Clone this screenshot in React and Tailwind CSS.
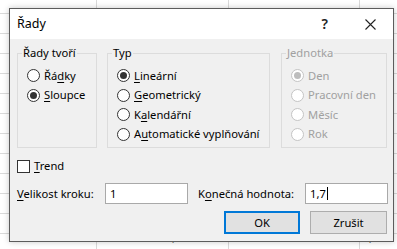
import React from "react";

const Radio = ({ checked, disabled }) => (
  <span
    className={`flex w-[13px] h-[13px] shrink-0 items-center justify-center rounded-full border bg-white ${
      disabled ? "border-[#c4c4c4]" : "border-[#333333]"
    }`}
  >
    {checked && (
      <span className={`w-[7px] h-[7px] rounded-full ${disabled ? "bg-[#bdbdbd]" : "bg-[#333333]"}`} />
    )}
  </span>
);

// accelerator key gets underlined like in win32 dialogs
const Label = ({ text, u }) => {
  if (u === undefined) return <span>{text}</span>;
  return (
    <span>
      {text.slice(0, u)}
      <span className="underline underline-offset-[2px]">{text[u]}</span>
      {text.slice(u + 1)}
    </span>
  );
};

const Option = ({ label, u, checked, disabled }) => (
  <div className={`flex h-[19.5px] items-center gap-[4px] pl-[9px] ${disabled ? "text-[#a0a0a0]" : "text-black"}`}>
    <Radio checked={checked} disabled={disabled} />
    <Label text={label} u={u} />
  </div>
);

const Group = ({ title, width, disabled, children }) => (
  <fieldset className={`h-[102px] ${width} border border-[#dcdcdc]`}>
    <legend className={`ml-[4px] px-[1px] leading-[14px] ${disabled ? "text-[#a0a0a0]" : "text-black"}`}>
      {title}
    </legend>
    <div className="flex flex-col pt-[6px]">{children}</div>
  </fieldset>
);

export default function App() {
  return (
    <div
      className="relative w-[397px] h-[249px] overflow-hidden bg-white bg-[linear-gradient(to_right,transparent_96px,#dadada_96px,#dadada_97px,transparent_97px,transparent_228px,#dadada_228px,#dadada_229px,transparent_229px,transparent_359px,#dadada_359px,#dadada_360px,transparent_360px),linear-gradient(to_bottom,transparent_13px,#dadada_13px,#dadada_14px,transparent_14px)] bg-[length:397px_249px,397px_20px] text-[11.2px] leading-[14px]"
      style={{ fontFamily: '"Noto Sans", "Open Sans", sans-serif' }}
    >
      <span className="absolute left-[172px] top-[243px] text-[9px] leading-[6px] text-[#444]">´</span>
      <span className="absolute left-[369px] top-[243px] text-[9px] leading-[6px] text-[#444]">´</span>

      {/* dialog window */}
      <div className="absolute left-[9px] top-[8px] w-[385px] h-[234px] border border-[#5c5c5c] bg-[#f0f0f0] shadow-[0_0_6px_rgba(0,0,0,0.22)]">
        <div className="flex h-[30px] items-center bg-white pl-[7px]">
          <span className="text-[12.5px]">Řady</span>
          <span className="ml-auto text-[14px] font-semibold text-[#222]">?</span>
          <svg className="ml-[37px] mr-[17px]" width="11" height="11" viewBox="0 0 11 11">
            <path d="M0.5 0.5L10.5 10.5M10.5 0.5L0.5 10.5" stroke="#222" strokeWidth="1.1" />
          </svg>
        </div>

        <div className="flex flex-col pl-[7px]">
          <div className="mt-[7px] flex">
            <Group title="Řady tvoří" width="w-[80px]">
              <Option label="Řádky" u={2} />
              <Option label="Sloupce" u={0} checked />
            </Group>
            <div className="ml-[10px]">
              <Group title="Typ" width="w-[163px]">
                <Option label="Lineární" u={0} checked />
                <Option label="Geometrický" u={0} />
                <Option label="Kalendářní" u={1} />
                <Option label="Automatické vyplňování" u={1} />
              </Group>
            </div>
            <div className="ml-[11px]">
              <Group title="Jednotka" width="w-[106px]" disabled>
                <Option label="Den" checked disabled />
                <Option label="Pracovní den" disabled />
                <Option label="Měsíc" disabled />
                <Option label="Rok" disabled />
              </Group>
            </div>
          </div>

          <div className="mt-[8px] flex h-[20px] items-center gap-[4px]">
            <span className="w-[13px] h-[13px] border border-[#333333] bg-white" />
            <Label text="Trend" u={0} />
          </div>

          <div className="mt-[7px] flex h-[21px] items-center">
            <span className="w-[88px]">
              <Label text="Velikost kroku:" u={0} />
            </span>
            <div className="flex h-[21px] w-[83px] items-center border border-[#a9a9a9] bg-white pl-[4px]">1</div>
            <span className="ml-[10px] w-[107px]">
              <Label text="Konečná hodnota:" u={1} />
            </span>
            <div className="flex h-[21px] w-[83px] items-center border border-[#a9a9a9] bg-white pl-[4px]">
              1,7<span className="ml-[1px] h-[13px] w-[1px] bg-black" />
            </div>
          </div>

          <div className="mt-[7px] flex justify-end gap-[10px] pr-[6px]">
            <button className="h-[23px] w-[76px] border border-[#0078d7] bg-[#e1e1e1] shadow-[inset_0_0_0_1px_#0078d7]">OK</button>
            <button className="h-[23px] w-[77px] border border-[#adadad] bg-[#e1e1e1]">Zrušit</button>
          </div>
        </div>
      </div>
    </div>
  );
}
